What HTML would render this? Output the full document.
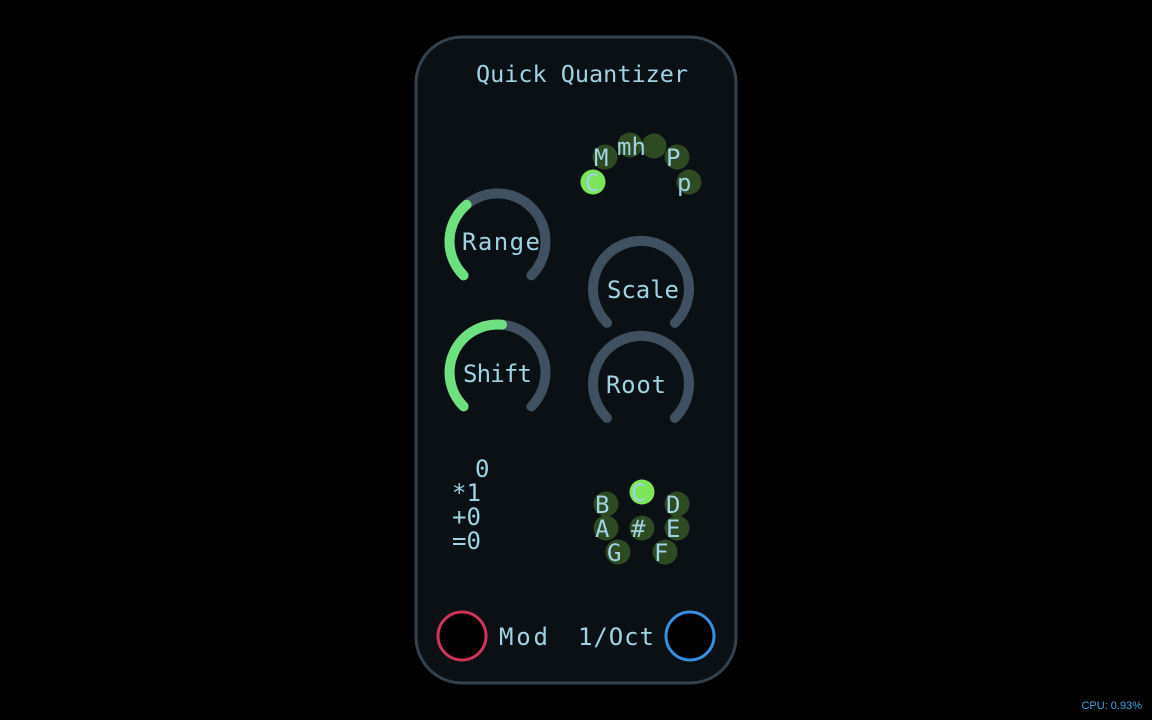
<!DOCTYPE html>
<html><head><style>
html,body{margin:0;padding:0;background:#000;width:1152px;height:720px;overflow:hidden}
svg{position:absolute;left:0;top:0}
text{font-family:"DejaVu Sans Mono","Liberation Mono",monospace;fill:#9fd3e3}
.cpu{position:absolute;right:10px;bottom:8px;font:11px "Liberation Sans",sans-serif;color:#3ba6e0}
</style></head><body>
<svg width="1152" height="720" viewBox="0 0 1152 720">
<rect x="416" y="37" width="320" height="646" rx="46" fill="#0b1014" stroke="#34424f" stroke-width="3"/>
<text x="476" y="82" font-size="23.5" textLength="212">Quick Quantizer</text>

<g fill="none" stroke-width="10" stroke-linecap="round">
<path d="M463.6 275.4 A48 48 0 1 1 531.4 275.4" stroke="#3f5060"/>
<path d="M463.6 275.4 A48 48 0 0 1 466.6 204.7" stroke="#6fe07f"/>
<path d="M463.6 406.4 A48 48 0 1 1 531.4 406.4" stroke="#3f5060"/>
<path d="M463.6 406.4 A48 48 0 0 1 502 324.7" stroke="#6fe07f"/>
<path d="M607.1 322.9 A48 48 0 1 1 674.9 322.9" stroke="#3f5060"/>
<path d="M607.1 417.9 A48 48 0 1 1 674.9 417.9" stroke="#3f5060"/>
</g>
<text x="462" y="250" font-size="24" textLength="78">Range</text>
<text x="463" y="382" font-size="24" textLength="69">Shift</text>
<text x="607" y="298" font-size="24" textLength="72">Scale</text>
<text x="606" y="393" font-size="24" textLength="60">Root</text>

<g fill="#2e4a22">
<circle cx="605" cy="157" r="12.5"/><circle cx="630" cy="145" r="12.5"/><circle cx="654" cy="146" r="12.5"/>
<circle cx="677" cy="157" r="12.5"/><circle cx="689" cy="182" r="12.5"/>
</g>
<circle cx="593" cy="182" r="12.5" fill="#7de55a"/>
<g font-size="24">
<text x="585" y="191">C</text><text x="594" y="166">M</text><text x="617" y="155">mh</text>
<text x="666" y="166">P</text><text x="677" y="191">p</text>
</g>

<g font-size="24">
<text x="475" y="477">0</text>
<text x="452" y="501">*1</text>
<text x="452" y="525">+0</text>
<text x="452" y="549">=0</text>
</g>

<g fill="#2e4a22">
<circle cx="606" cy="504" r="12.5"/><circle cx="677" cy="504" r="12.5"/>
<circle cx="606" cy="528" r="12.5"/><circle cx="642" cy="528" r="12.5"/><circle cx="677" cy="528" r="12.5"/>
<circle cx="618" cy="552" r="12.5"/><circle cx="665" cy="552" r="12.5"/>
</g>
<circle cx="642" cy="492" r="12.5" fill="#7de55a"/>
<g font-size="24">
<text x="631" y="501">C</text>
<text x="595" y="513">B</text><text x="666" y="513">D</text>
<text x="595" y="537">A</text><text x="631" y="537">#</text><text x="666" y="537">E</text>
<text x="607" y="561">G</text><text x="654" y="561">F</text>
</g>

<circle cx="462" cy="636" r="24" fill="#000" stroke="#d0325a" stroke-width="3"/>
<circle cx="690" cy="636" r="24" fill="#000" stroke="#3a8ee0" stroke-width="3"/>
<text x="499" y="645" font-size="24" textLength="49">Mod</text>
<text x="578" y="645" font-size="24" textLength="76">1/Oct</text>
</svg>
<div class="cpu">CPU: 0.93%</div>
</body></html>
